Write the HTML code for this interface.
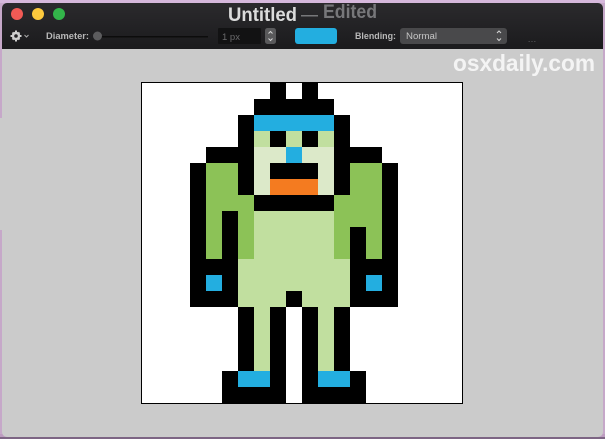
<!DOCTYPE html>
<html>
<head>
<meta charset="utf-8">
<style>
html,body{margin:0;padding:0;width:605px;height:439px;overflow:hidden;background:#c4a5c6}
svg{display:block;position:absolute;left:0;top:0}
text{font-family:"Liberation Sans",sans-serif}
</style>
</head>
<body>
<svg width="605" height="439" viewBox="0 0 605 439">
<defs>
<linearGradient id="bar" x1="0" y1="0" x2="0" y2="1"><stop offset="0" stop-color="#2b2a2d"/><stop offset="1" stop-color="#1b1b1d"/></linearGradient>
</defs>
<rect width="605" height="439" fill="#c6a8c9"/>
<rect x="0" y="0" width="605" height="3" fill="#d6b8dc"/>
<rect x="0" y="434" width="605" height="5" fill="#bd9cc0"/>
<rect x="0" y="437" width="605" height="2" fill="#7d6584"/>
<rect x="2" y="3" width="601" height="434" rx="5" fill="#cbcbcb"/>
<rect x="0" y="118" width="3" height="112" fill="#cbcbcb"/>
<path d="M2 49V8a5 5 0 0 1 5-5H598a5 5 0 0 1 5 5V49Z" fill="url(#bar)"/>

<circle cx="17" cy="14" r="6" fill="#f25a55"/>
<circle cx="38" cy="14" r="6" fill="#fdc93d"/>
<circle cx="59" cy="14" r="6" fill="#33b54a"/>

<text x="228" y="21" font-size="19" font-weight="bold" fill="#dcdcdc" textLength="69" lengthAdjust="spacingAndGlyphs">Untitled</text>
<rect x="301" y="15" width="17" height="1.500" fill="#77777a"/>
<text x="323" y="18" font-size="19" font-weight="bold" fill="#77777a" textLength="54" lengthAdjust="spacingAndGlyphs">Edited</text>

<g fill="#d0d0d0">
<path d="M15 30.500h2v11h-2zM10.500 35h11v2h-11z"/>
<path d="M11.800 33.200l1.400-1.400 7 7-1.400 1.400zM18.800 31.800l1.400 1.400-7 7-1.400-1.400z"/>
<circle cx="16" cy="36" r="4.200"/>
<circle cx="16" cy="36" r="1.800" fill="#232225"/>
</g>
<path d="M24.500 35l2 2 2-2" fill="none" stroke="#aaa" stroke-width="1"/>

<text x="46" y="39" font-size="9" font-weight="bold" fill="#b8b8b8" textLength="43" lengthAdjust="spacingAndGlyphs">Diameter:</text>
<rect x="97" y="36" width="111" height="1.500" fill="#0c0c0c"/>
<circle cx="97.500" cy="36" r="4.500" fill="#5c5c5e"/>

<rect x="218" y="28" width="43" height="16" rx="1" fill="#121213"/>
<text x="222" y="40" font-size="9.500" fill="#6a6a6c" textLength="18" lengthAdjust="spacingAndGlyphs">1 px</text>
<rect x="265" y="28" width="11" height="16" rx="2.500" fill="#59595b"/>
<path d="M268.500 33.500l2-2 2 2M268.500 38.500l2 2 2-2" fill="none" stroke="#d5d5d5" stroke-width="1"/>

<rect x="295" y="28" width="42" height="16" rx="3" fill="#23aee0"/>

<text x="355" y="39" font-size="9" font-weight="bold" fill="#b8b8b8" textLength="41" lengthAdjust="spacingAndGlyphs">Blending:</text>
<rect x="400" y="28" width="107" height="16" rx="3" fill="#49494b"/>
<text x="406" y="39" font-size="9" fill="#c6c6c6" textLength="31" lengthAdjust="spacingAndGlyphs">Normal</text>
<path d="M497 33l2-2 2 2M497 38.500l2 2 2-2" fill="none" stroke="#d5d5d5" stroke-width="1"/>
<text x="528" y="42" font-size="8" fill="#77777a" textLength="8" lengthAdjust="spacing">...</text>

<text x="453" y="71" font-size="23" font-weight="bold" fill="#f4f4f4" textLength="142" lengthAdjust="spacingAndGlyphs">osxdaily.com</text>

<rect x="141.500" y="82.500" width="321" height="321" fill="#fff" stroke="#000" stroke-width="1"/>

<g transform="translate(142 83) scale(16)" shape-rendering="crispEdges">
<g fill="#000">
<rect x="8" y="0" width="1" height="1"/><rect x="10" y="0" width="1" height="1"/>
<rect x="7" y="1" width="5" height="1"/>
<rect x="6" y="2" width="1" height="6"/><rect x="12" y="2" width="1" height="6"/>
<rect x="8" y="3" width="1" height="1"/><rect x="10" y="3" width="1" height="1"/>
<rect x="4" y="4" width="2" height="1"/><rect x="13" y="4" width="2" height="1"/>
<rect x="3" y="5" width="1" height="9"/><rect x="15" y="5" width="1" height="9"/>
<rect x="8" y="5" width="3" height="1"/>
<rect x="7" y="7" width="5" height="1"/>
<rect x="5" y="8" width="1" height="6"/>
<rect x="13" y="9" width="1" height="5"/>
<rect x="4" y="11" width="1" height="3"/><rect x="14" y="11" width="1" height="3"/>
<rect x="9" y="13" width="1" height="1"/>
<rect x="6" y="14" width="1" height="4"/><rect x="8" y="14" width="1" height="6"/>
<rect x="10" y="14" width="1" height="6"/><rect x="12" y="14" width="1" height="4"/>
<rect x="5" y="18" width="1" height="2"/><rect x="13" y="18" width="1" height="2"/>
<rect x="6" y="19" width="2" height="1"/><rect x="11" y="19" width="2" height="1"/>
</g>
<g fill="#23aee0">
<rect x="7" y="2" width="5" height="1"/>
<rect x="9" y="4" width="1" height="1"/>
<rect x="4" y="12" width="1" height="1"/><rect x="14" y="12" width="1" height="1"/>
<rect x="6" y="18" width="2" height="1"/><rect x="11" y="18" width="2" height="1"/>
</g>
<g fill="#c1df9f">
<rect x="7" y="3" width="1" height="1"/><rect x="9" y="3" width="1" height="1"/><rect x="11" y="3" width="1" height="1"/>
<rect x="7" y="8" width="5" height="3"/>
<rect x="6" y="11" width="7" height="2"/>
<rect x="6" y="13" width="3" height="1"/><rect x="10" y="13" width="3" height="1"/>
<rect x="7" y="14" width="1" height="4"/><rect x="11" y="14" width="1" height="4"/>
</g>
<g fill="#dce9c9">
<rect x="7" y="4" width="2" height="1"/><rect x="10" y="4" width="2" height="1"/>
<rect x="7" y="5" width="1" height="2"/><rect x="11" y="5" width="1" height="2"/>
</g>
<rect x="8" y="6" width="3" height="1" fill="#f47b20"/>
<g fill="#8cc257">
<rect x="4" y="5" width="2" height="2"/><rect x="13" y="5" width="2" height="2"/>
<rect x="4" y="7" width="3" height="1"/><rect x="12" y="7" width="3" height="1"/>
<rect x="4" y="8" width="1" height="3"/><rect x="6" y="8" width="1" height="3"/>
<rect x="12" y="8" width="3" height="1"/>
<rect x="12" y="9" width="1" height="2"/><rect x="14" y="9" width="1" height="2"/>
</g>
</g>
</svg>
</body>
</html>
